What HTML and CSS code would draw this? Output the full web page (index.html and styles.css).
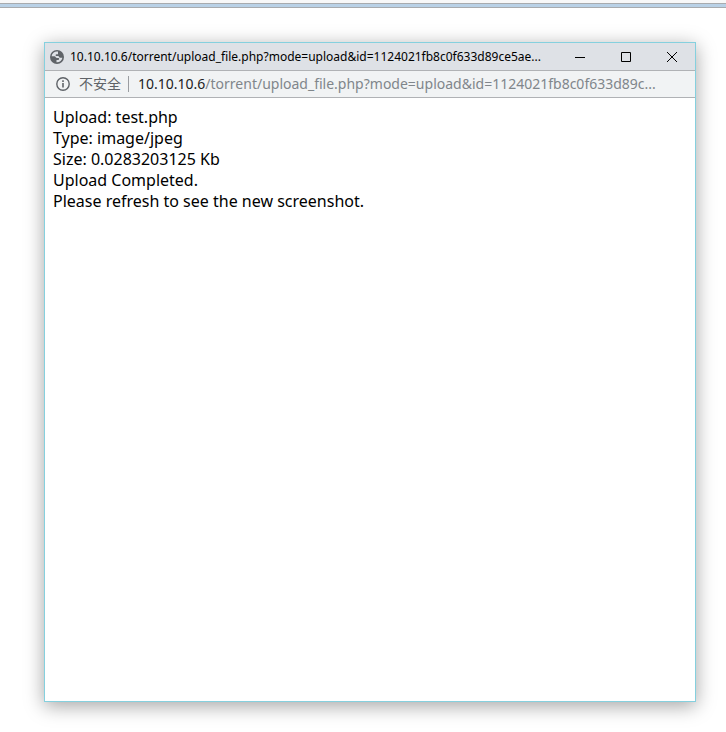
FILE: index.html
```html
<!DOCTYPE html>
<html lang="zh-CN">
<head>
<meta charset="utf-8">
<title>Upload</title>
<link rel="stylesheet" href="styles.css">
</head>
<body>
<div class="strip"></div>
<main class="window">
  <header class="titlebar">
    <svg class="globe" viewBox="0 0 14 14" aria-hidden="true"><circle cx="7" cy="7" r="7" fill="#5f6368"/><path d="M8 1.600C5 1 2 3 1.600 6.200h2.900c1.200 0 1.300 1.800 2.500 1.800h1.500c1 0 1 2-.5 2H6.500v2.300c3 .3 5.500-1.800 5.900-4.500h-2.300C9 7.800 9.300 6 8 6H6.200c-.8 0-.8-1.700.3-1.700H8z" fill="#dee1e6"/></svg>
    <h1 class="title">10.10.10.6/torrent/upload_file.php?mode=upload&amp;id=1124021fb8c0f633d89ce5ae...</h1>
    <div class="controls">
      <button type="button" aria-label="Minimize"><svg viewBox="0 0 12 12"><path d="M1 6.500h10"/></svg></button>
      <button type="button" aria-label="Maximize"><svg viewBox="0 0 12 12"><path d="M1.500 1.500h9v9h-9z"/></svg></button>
      <button type="button" aria-label="Close"><svg viewBox="0 0 12 12"><path d="M1 1l10 10M11 1L1 11"/></svg></button>
    </div>
  </header>
  <div class="address">
    <svg class="info" viewBox="0 0 14 14" aria-hidden="true"><circle cx="7" cy="7" r="6.200" fill="none" stroke="#5f6368" stroke-width="1.400"/><path d="M6.200 6h1.600v4.500H6.200zM6.200 3.300h1.600v1.600H6.200z" fill="#5f6368"/></svg>
    <span class="security">不安全</span>
    <span class="url"><span class="host">10.10.10.6</span>/torrent/upload_file.php?mode=upload&amp;id=1124021fb8c0f633d89c...</span>
  </div>
  <p class="result">Upload: test.php<br>Type: image/jpeg<br>Size: 0.0283203125 Kb<br>Upload Completed.<br>Please refresh to see the new screenshot.</p>
</main>
</body>
</html>
```
FILE: styles.css
```css
* {
  box-sizing: border-box;
}

body {
  display: flex;
  flex-direction: column;
  min-height: 100vh;
  margin: 0;
  background: #fff;
  color: #000;
  font-family: "Noto Sans", "Noto Sans CJK SC", sans-serif;
}

.strip {
  height: 8px;
  border-top: 3px solid #f8f8f8;
  background: #b9d1e6;
  box-shadow: inset 0 1px #a8abae, inset 0 -1px #a8abae;
}

.window {
  flex: 1;
  margin: 34px 30px 30px 44px;
  border: 1px solid #85d0de;
  background: #fff;
  box-shadow: 0 4px 18px rgba(0, 0, 0, 0.36);
}

.titlebar {
  display: flex;
  align-items: center;
  height: 28px;
  padding-left: 5px;
  border-bottom: 1px solid #b0b2b5;
  background: #dee1e6;
}

.globe {
  flex: none;
  width: 14px;
  height: 14px;
  margin-right: 6px;
}

.title {
  flex: 1;
  min-width: 0;
  margin: 0;
  overflow: hidden;
  font-size: 12px;
  font-weight: 400;
  line-height: 20px;
  white-space: nowrap;
}

.controls {
  display: flex;
}

.controls button {
  display: flex;
  align-items: center;
  justify-content: center;
  width: 46px;
  height: 27px;
  padding: 0;
  border: 0;
  background: none;
}

.controls svg {
  width: 12px;
  height: 12px;
  fill: none;
  stroke: #000;
}

.address {
  display: flex;
  align-items: center;
  height: 27px;
  padding-left: 11px;
  border-bottom: 1px solid #b0b2b5;
  background: #f1f3f4;
  font-size: 14px;
  line-height: 20px;
}

.info {
  flex: none;
  width: 14px;
  height: 14px;
  margin-right: 9px;
}

.security {
  flex: none;
  height: 16px;
  margin-right: 9px;
  padding-right: 7px;
  border-right: 1px solid #9a9da1;
  color: #5f6368;
  line-height: 16px;
}

.url {
  overflow: hidden;
  color: #80868b;
  white-space: nowrap;
}

.host {
  color: #202124;
}

.result {
  margin: 9px 8px;
  font-size: 16px;
  line-height: 21px;
}
```
